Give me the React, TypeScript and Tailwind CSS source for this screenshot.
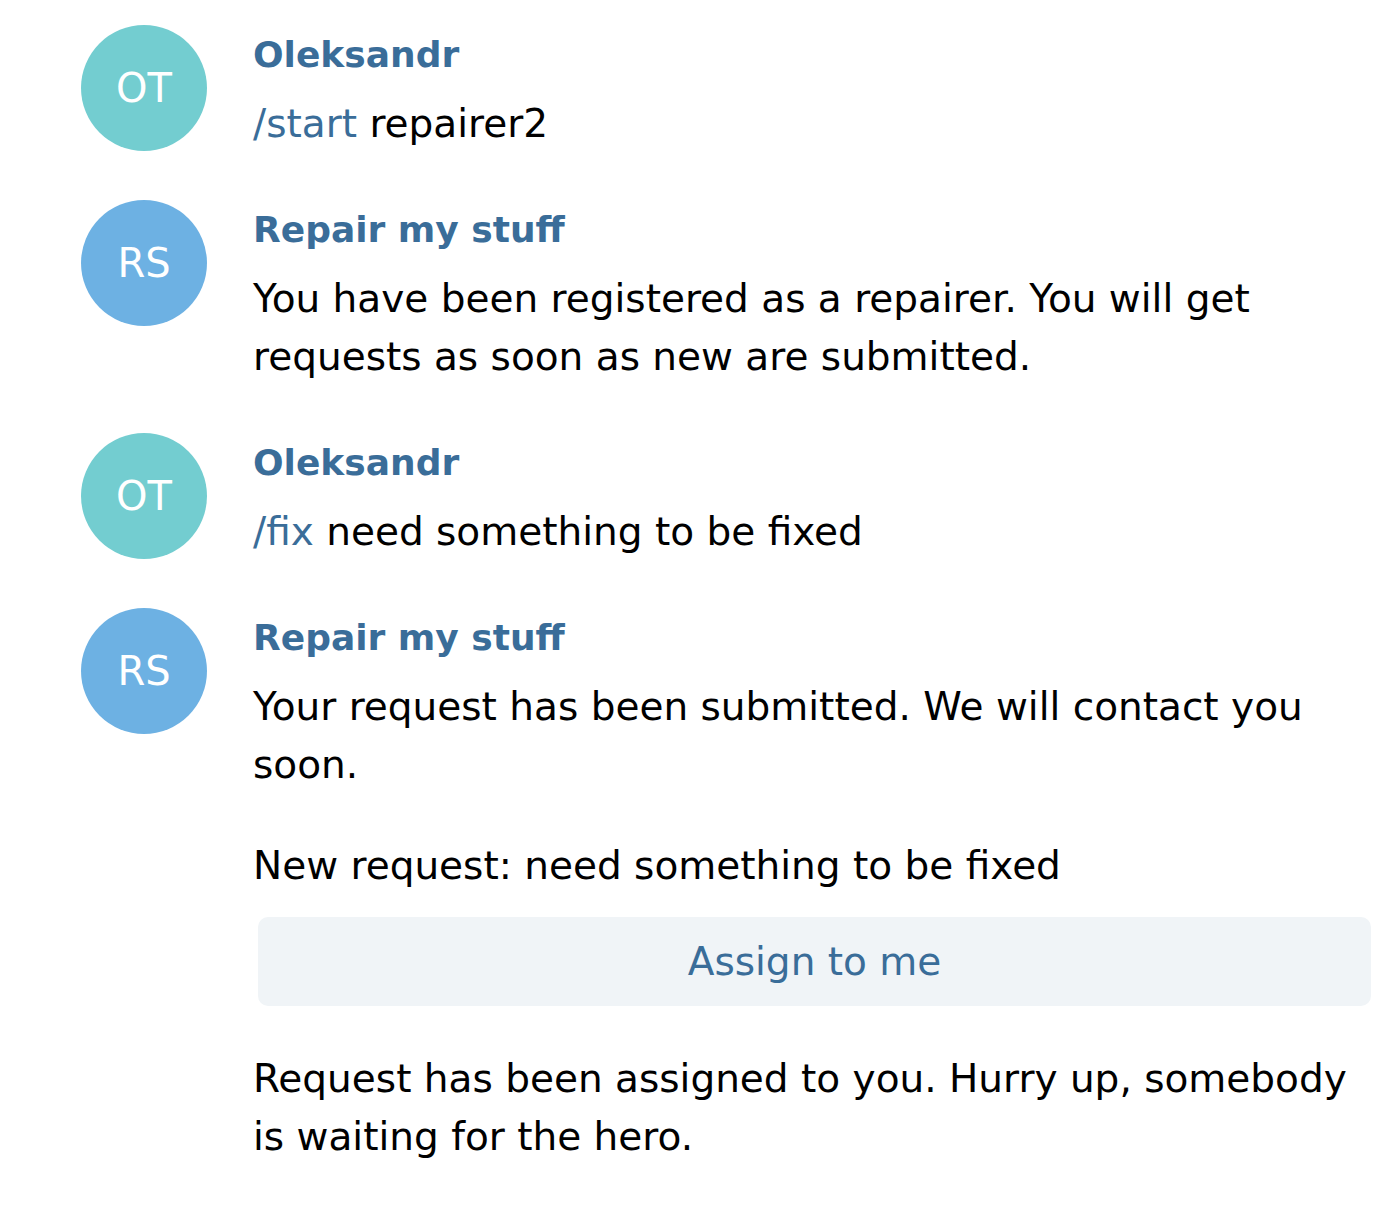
const font = { fontFamily: '"DejaVu Sans", sans-serif' };

type Msg = {
  initials: string;
  color: string;
  name: string;
  body: React.ReactNode;
};

function Avatar({ initials, color }: { initials: string; color: string }) {
  return (
    <div
      className={`flex h-[126px] w-[126px] shrink-0 items-center justify-center rounded-full text-[40px] text-white ${color}`}
    >
      {initials}
    </div>
  );
}

function Row({ initials, color, name, body }: Msg) {
  return (
    <div className="flex gap-[46px]">
      <Avatar initials={initials} color={color} />
      <div className="flex min-w-0 flex-1 flex-col pt-[5px]">
        <div className="mb-[15px] text-[36px] font-bold leading-[50px] text-[#3a6d99]">
          {name}
        </div>
        <div className="text-[39px] leading-[58px] text-black">{body}</div>
      </div>
    </div>
  );
}

export default function App() {
  return (
    <div className="min-h-[1210px] w-[1400px] bg-white" style={font}>
      <div className="flex flex-col gap-[47px] pl-[81px] pr-[29px] pt-[25px]">
        <Row
          initials="OT"
          color="bg-[#73cdd0]"
          name="Oleksandr"
          body={
            <>
              <span className="text-[#3a6d99]">/start</span> repairer2
            </>
          }
        />
        <Row
          initials="RS"
          color="bg-[#6db1e3]"
          name="Repair my stuff"
          body="You have been registered as a repairer. You will get requests as soon as new are submitted."
        />
        <Row
          initials="OT"
          color="bg-[#73cdd0]"
          name="Oleksandr"
          body={
            <>
              <span className="text-[#3a6d99]">/fix</span> need something to be fixed
            </>
          }
        />
        <Row
          initials="RS"
          color="bg-[#6db1e3]"
          name="Repair my stuff"
          body={
            <div className="flex flex-col">
              <p>Your request has been submitted. We will contact you soon.</p>
              <p className="mt-[43px]">New request: need something to be fixed</p>
              <button
                type="button"
                className="ml-[5px] mt-[22px] h-[89px] rounded-[10px] bg-[#f0f4f7] text-[39px] text-[#3a6d99]"
              >
                Assign to me
              </button>
              <p className="mt-[44px]">
                Request has been assigned to you. Hurry up, somebody is waiting for the hero.
              </p>
            </div>
          }
        />
      </div>
    </div>
  );
}
